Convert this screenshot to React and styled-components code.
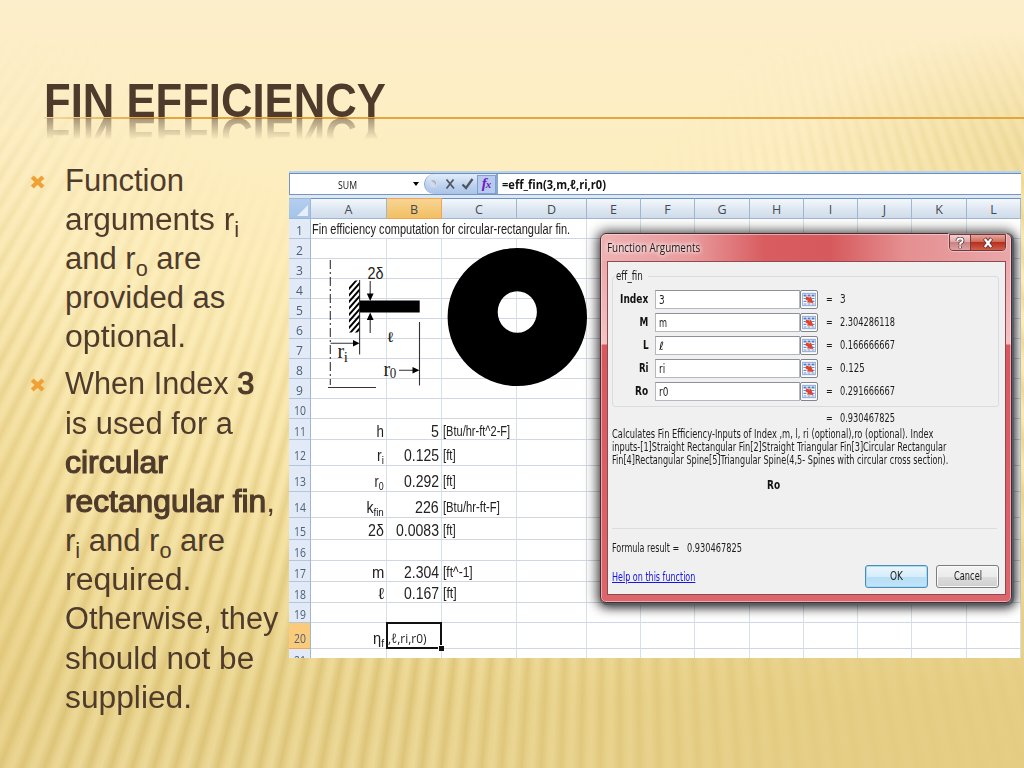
import React, { useLayoutEffect, useRef, useState } from "react";
import styled, { createGlobalStyle } from "styled-components";

const Global = createGlobalStyle`
  * { box-sizing: border-box; }
  body { margin: 0; overflow: hidden; }
  sub { font-size: 0.7em; line-height: 0; vertical-align: -0.3em; }
`;

/* Text squeezed or widened horizontally to a fixed measure */
const FitBox = styled.span`
  display: inline-flex;
  justify-content: ${(p) => (p.$right ? "flex-end" : "flex-start")};
  width: ${(p) => p.$w}px;
  white-space: pre;
`;
const FitInner = styled.span`
  flex: none;
  text-decoration: ${(p) => (p.$underline ? "underline" : "none")};
  transform-origin: ${(p) => (p.$right ? "100%" : "0")} 50%;
`;
function Fit({ w, right, underline, children }) {
  const ref = useRef(null);
  const [k, setK] = useState(1);
  useLayoutEffect(() => {
    if (ref.current && ref.current.offsetWidth) {
      setK(w / ref.current.offsetWidth);
    }
  }, [w]);
  return (
    <FitBox $w={w} $right={right}>
      <FitInner ref={ref} $right={right} $underline={underline} style={{ transform: `scaleX(${k})` }}>
        {children}
      </FitInner>
    </FitBox>
  );
}

const Slide = styled.main`
  width: 1024px;
  height: 768px;
  overflow: hidden;
  position: relative;
  isolation: isolate;
  color: #4f3b2b;
  font-family: "Liberation Sans", sans-serif;
  background: linear-gradient(180deg, #fdeecb 0, #fdeec4 110px, #fdedba 260px, #f8e5a8 440px, #eed892 590px, #e6cf86 700px, #e6cf88 768px);
  &::before {
    content: "";
    position: absolute;
    inset: 0;
    z-index: -1;
    background: repeating-conic-gradient(from 0deg at 620px -800px,
      rgba(190, 158, 70, 0.24) 0deg, rgba(255, 244, 200, 0.28) 0.32deg,
      rgba(255, 240, 190, 0.2) 0.48deg, rgba(190, 158, 70, 0.24) 0.72deg);
    mask-image:
      linear-gradient(180deg, transparent 30px, #000 150px),
      radial-gradient(ellipse 620px 420px at 430px 0, transparent 50%, rgba(0, 0, 0, 0.9) 110%),
      radial-gradient(ellipse 560px 260px at 1000px 740px, rgba(0, 0, 0, 0.25) 30%, #000 100%);
    mask-composite: intersect;
  }
  &::after {
    content: "";
    position: absolute;
    inset: 0;
    z-index: -1;
    background:
      radial-gradient(ellipse 620px 300px at 1024px 768px, rgba(229, 204, 130, 0.7), transparent),
      radial-gradient(ellipse 260px 130px at 1040px 160px, rgba(232, 208, 130, 0.55), transparent),
      radial-gradient(ellipse 90px 420px at 0 560px, rgba(226, 198, 118, 0.35), transparent);
  }
`;

const Header = styled.header`
  height: 171px;
  padding: 82px 0 0 44px;
`;
const Title = styled.h1`
  margin: 0;
  height: 35px;
  width: 345px;
  font-size: 49px;
  font-weight: 700;
  line-height: 36.6px;
  -webkit-box-reflect: below 1px linear-gradient(transparent 38%, rgba(0, 0, 0, 0.5));
`;
const Rule = styled.div`
  height: 2px;
  background: linear-gradient(90deg, rgba(226, 163, 62, 0.25), #e2a540 110px);
`;

const Columns = styled.div`
  display: flex;
  align-items: flex-start;
`;
const Bullets = styled.ul`
  list-style: none;
  margin: -10.5px 0 0;
  padding: 0 0 0 30px;
  width: 289px;
  flex: none;
  display: flex;
  flex-direction: column;
  gap: 7.9px;
`;
const Bullet = styled.li`
  display: grid;
  grid-template-columns: 35px 1fr;
  font-size: 31px;
  line-height: 39.2px;
`;
const Mark = styled.svg`
  width: 16px;
  height: 16px;
  margin-top: 13px;
`;
const Lines = styled.div`
  display: flex;
  flex-direction: column;
`;
const Line = styled.span`
  display: block;
  height: 39.2px;
  sub { vertical-align: -0.34em; }
`;
const Strong = styled.strong`
  font-weight: 400;
  -webkit-text-stroke: 1.2px currentColor;
`;

/* ---------- spreadsheet ---------- */
const Sheet = styled.section`
  position: relative;
  width: 732px;
  height: 487px;
  overflow: hidden;
  background: #fff;
  color: #222;
`;
const FormulaBar = styled.div`
  display: flex;
  height: 24px;
  border-top: 2px solid #b9d3ee;
  border-bottom: 1px solid #7795bd;
  box-shadow: inset 0 1px #6c8ebb, inset 1px 0 #7795bd;
  font-family: "Open Sans", sans-serif;
`;
const NameBox = styled.div`
  width: 134px;
  padding: 1px 4px 0 49px;
  display: flex;
  align-items: center;
  justify-content: space-between;
  font-size: 11.5px;
  color: #111;
`;
const Caret = styled.i`
  border: 3.5px solid transparent;
  border-top: 4px solid #000;
  border-bottom: 0;
`;
const FxTools = styled.div`
  display: flex;
  align-items: center;
  width: 74px;
  margin: 1px 0 0 1px;
  border-radius: 11px 0 0 11px;
  background: linear-gradient(#e3edf9, #bcd1ee 60%, #a9c4e9);
  border: 1px solid #8aa7d0;
  border-width: 0 2px 0 1px;
`;
const FxSvg = styled.svg`
  width: 52px;
  height: 20px;
  flex: none;
`;
const Fx = styled.span`
  flex: 1;
  height: 19px;
  border: 1px solid #7e9fd4;
  background: #b6cbee;
  color: #7416c4;
  font: italic 700 15px/14px "Liberation Serif", serif;
  text-align: center;
  small { font-size: 11px; margin-left: -1px; }
`;
const Formula = styled.div`
  padding: 1px 0 0 4px;
  font-size: 13px;
  font-weight: 700;
  line-height: 20px;
  color: #111;
`;
const Strip = styled.div`
  height: 3px;
  background: #dbe8f6;
`;
const Grid = styled.div`
  display: grid;
  grid-template-columns: 22px 76px 55px 75px 70px 54px 54px 55px 54px 54px 54px 55px 54px;
  grid-template-rows: 21px 20px 20px 20px 20px 20px 20px 20px 20px 20px 20px 21px 26px 26px 26px 22px 21px 21px 21px 20px 26px 20px;
`;
const HeadCell = styled.div`
  display: flex;
  justify-content: center;
  border: 1px solid #9eb6ce;
  border-width: 1px 1px 1px 0;
  border-top-color: #6f93bf;
  background: ${(p) => (p.$on ? "linear-gradient(#f8d593, #f2bf62)" : "linear-gradient(#f4f8fd, #dfe8f2 50%, #d0dcea)")};
  ${(p) => p.$on && "border-color: #f0a458;"}
  color: #434a52;
  font: 12.5px/21px "Open Sans", sans-serif;
`;
const Corner = styled.div`
  border: 1px solid #9eb6ce;
  border-width: 1px 1px 1px 0;
  background: linear-gradient(#b4cfee, #a3c3e9);
  display: flex;
  justify-content: flex-end;
  align-items: flex-end;
  padding: 2px;
  &::after {
    content: "";
    border-left: 11px solid transparent;
    border-bottom: 11px solid #e6eff9;
  }
`;
const RowHead = styled.div`
  display: flex;
  align-items: flex-end;
  justify-content: center;
  padding-bottom: ${(p) => (p.$tall ? 2 : 0.5)}px;
  border-right: 1px solid #9eb6ce;
  border-bottom: 1px solid ${(p) => (p.$on ? "#f0a458" : "#b4c6da")};
  background: ${(p) => (p.$on ? "#fbcb7c" : "#e1eaf6")};
  color: #4a6178;
  font: 13px/16px "Open Sans", sans-serif;
`;
const Cell = styled.div`
  display: flex;
  align-items: flex-end;
  justify-content: ${(p) => (p.$right ? "flex-end" : "flex-start")};
  grid-column: span ${(p) => p.$span || 1};
  padding: 0 ${(p) => (p.$right ? 2 : 0)}px ${(p) => (p.$tall ? 2 : p.$low ? 0 : 1)}px ${(p) => (p.$right ? 0 : 1)}px;
  border-right: 1px solid #d7dfe8;
  border-bottom: 1px solid #d0d7e2;
  font-size: ${(p) => (p.$small ? 14 : 16)}px;
  line-height: ${(p) => (p.$small ? 15 : 15.5)}px;
  min-width: 0;
`;
const ActiveCell = styled(Cell)`
  position: relative;
  border: 0;
  padding-bottom: 2px;
  font: 13px/18px "Open Sans", sans-serif;
  &::before {
    content: "";
    position: absolute;
    inset: -1px 0 0 -1px;
    border: 2px solid #111;
  }
  &::after {
    content: "";
    position: absolute;
    right: -2px;
    bottom: -2px;
    width: 5px;
    height: 5px;
    background: #111;
    border: 1px solid #fff;
    border-width: 1px 0 0 1px;
  }
`;
const Drawing = styled.svg`
  position: absolute;
  left: 0;
  top: 0;
  width: 732px;
  height: 487px;
`;

/* ---------- dialog window ---------- */
const Dialog = styled.div`
  position: absolute;
  left: 311px;
  top: 62px;
  width: 412px;
  height: 370px;
  display: flex;
  flex-direction: column;
  padding: 1px 5px 7px 6px;
  border: 1px solid #4b2b31;
  border-radius: 6px;
  background:
    linear-gradient(90deg, #eeb2b3 0, #e99b9d 22%, #d85c60 40%, #d65a5d 56%, #e58f91 74%, #e9a7a8 100%) 0 0 / 100% 27px no-repeat,
    linear-gradient(#eaa1a4 0, #f3c3c4 110px, #d9575d 111px, #dc666b 100%);
  box-shadow: inset 0 0 0 1px rgba(255, 225, 225, 0.55), 1px 1px 0 1px #53606b, 0 1px 12px 4px rgba(0, 0, 0, 0.55), 2px 3px 10px rgba(0, 0, 0, 0.6);
  font-family: "DejaVu Sans Condensed", "DejaVu Sans", sans-serif;
  font-size: 11.5px;
  color: #1c1c1c;
`;
const TitleBar = styled.div`
  display: flex;
  justify-content: space-between;
  height: 26px;
  line-height: 25px;
  flex: none;
  text-shadow: 0 0 5px #fff, 0 0 6px #fff;
  font-family: "Open Sans", sans-serif;
  font-size: 12px;
`;
const WinButtons = styled.div`
  display: flex;
  height: 17px;
  margin-top: -1px;
  border: 1px solid #6c3940;
  border-radius: 0 0 4px 4px;
  overflow: hidden;
  box-shadow: 0 0 0 1px rgba(255, 220, 220, 0.5);
`;
const WinButton = styled.span`
  display: flex;
  align-items: center;
  justify-content: center;
  width: ${(p) => p.$w}px;
  background: ${(p) => (p.$close ? "linear-gradient(#e7a79a, #d06a5a 45%, #b5301d 50%, #d0604a)" : "linear-gradient(#f3d0cf, #e5a9a9 45%, #c98283 50%, #dda2a2)")};
  border-left: ${(p) => (p.$close ? "1px solid #7c3b3f" : "0")};
  svg { width: 12px; height: 12px; }
`;
const Body = styled.div`
  flex: 1;
  border: 1px solid #8e4a50;
  background: #f0f0f0;
  padding: 14px 6px 0 3.5px;
  display: flex;
  flex-direction: column;
`;
const Group = styled.div`
  height: 131px;
  border: 1px solid #d9dcdf;
  border-radius: 3px;
  padding: 0 0 0 2px;
`;
const Legend = styled.div`
  width: 33px;
  height: 13px;
  margin-top: -7px;
  padding-left: 1.5px;
  line-height: 12px;
  background: #f0f0f0;
`;
const ArgRow = styled.div`
  display: flex;
  height: 19px;
  margin-top: ${(p) => (p.$first ? 7 : 4.1)}px;
  line-height: 18px;
  width: 372px;
`;
const ArgLabel = styled.b`
  width: 34px;
  margin-right: 6.5px;
  display: flex;
  justify-content: flex-end;
  color: #111;
`;
const Input = styled.div`
  width: 145px;
  padding: 0 0 0 3px;
  line-height: 18px;
  background: #fff;
  border: 1px solid #b4b7bd;
  border-top-color: #8d9097;
`;
const RefButton = styled.span`
  width: 18px;
  border: 1px solid #80848b;
  border-radius: 2px;
  background: #eceff3;
  box-shadow: inset 0 0 0 1px #fff;
  padding: 1px;
  svg { display: block; width: 14px; height: 15px; }
`;
const Equals = styled.span`
  width: 14px;
  margin-left: 8px;
`;
const ResultLine = styled.div`
  display: flex;
  height: 16px;
  margin-top: 4px;
  padding-left: 214.5px;
  line-height: 15px;
  flex: none;
`;
const ResultValue = styled.span`
  margin-left: 7px;
`;
const Description = styled.div`
  display: flex;
  flex-direction: column;
  height: 50px;
  margin-top: 0.5px;
  line-height: 13.1px;
`;
const Current = styled.b`
  display: flex;
  justify-content: center;
  height: 51px;
  padding-right: 62px;
  border-bottom: 1px solid #dcdcdc;
  margin-right: 2px;
  color: #111;
`;
const ResultText = styled.div`
  display: flex;
  gap: 8px;
  margin-top: 12px;
  height: 15px;
  line-height: 15px;
`;
const Footer = styled.div`
  display: flex;
  align-items: flex-start;
  margin-top: 9px;
  gap: 8px;
`;
const HelpLink = styled.a`
  flex: 1;
  color: #1414e6;
  line-height: 24px;
`;
const Button = styled.span`
  display: flex;
  justify-content: center;
  width: 63px;
  height: 23px;
  line-height: 20px;
  border: 1px solid ${(p) => (p.$primary ? "#4d8cb8" : "#7d7d7d")};
  border-radius: 3px;
  box-shadow: inset 0 0 0 1px ${(p) => (p.$primary ? "#a8dcf5" : "#fafafa")};
  background: ${(p) => (p.$primary ? "linear-gradient(#eaf6fd, #d6edfb 50%, #b7def6 51%, #c0e4f9)" : "linear-gradient(#f3f3f3, #ebebeb 50%, #dddddd 51%, #cfcfcf)")};
`;

const sheetRows = [
  { n: 11, low: true, a: "h", aw: 7.5, b: "5", bw: 8, c: "[Btu/hr-ft^2-F]", cw: 67 },
  { n: 12, tall: true, a: <>r<sub>i</sub></>, aw: 7, b: "0.125", bw: 35, c: "[ft]", cw: 13 },
  { n: 13, tall: true, a: <>r<sub>0</sub></>, aw: 9.5, b: "0.292", bw: 35, c: "[ft]", cw: 13 },
  { n: 14, tall: true, a: <>k<sub>fin</sub></>, aw: 17.5, b: "226", bw: 24, c: "[Btu/hr-ft-F]", cw: 57 },
  { n: 15, a: "2δ", aw: 16, b: "0.0083", bw: 43, c: "[ft]", cw: 13 },
  { n: 16 },
  { n: 17, a: "m", aw: 12, b: "2.304", bw: 35, c: "[ft^-1]", cw: 30 },
  { n: 18, a: "ℓ", aw: 5.5, b: "0.167", bw: 35, c: "[ft]", cw: 14 },
  { n: 19 },
  { n: 20, tall: true, a: <>η<sub>f</sub></>, aw: 11, active: true },
  { n: 21 },
];

const args = [
  { label: "Index", lw: 28, value: "3", vw: 6, out: "3", ow: 6 },
  { label: "M", lw: 8.5, value: "m", vw: 8, out: "2.304286118", ow: 55 },
  { label: "L", lw: 6, value: "ℓ", vw: 4.5, out: "0.166666667", ow: 55 },
  { label: "Ri", lw: 10, value: "ri", vw: 6, out: "0.125", ow: 25 },
  { label: "Ro", lw: 13, value: "r0", vw: 9.5, out: "0.291666667", ow: 55 },
];

const Blank = ({ count }) => Array.from({ length: count }, (_, i) => <Cell key={i} />);

const BulletMark = () => (
  <Mark viewBox="0 0 16 16">
    <path d="M2.2 3 L13 13 M13 3 L2.2 13" stroke="#f0a136" strokeWidth="4.3" fill="none" />
  </Mark>
);

function RefIcon() {
  return (
    <svg viewBox="0 0 14 15">
      <rect x="0.5" y="1.5" width="13" height="12" fill="#fff" stroke="#9db4da" />
      <path d="M1.500 3.500H12.500" stroke="#4f7ec8" strokeWidth="2" strokeDasharray="3 1" />
      <path d="M1.500 6.500H13M1.500 9.300H13M1.500 12H13" stroke="#5f8bd0" strokeWidth="1.200" strokeDasharray="3 1" />
      <path d="M4 4.600 L7.600 5.600 L9 4.400 L11.400 11 L4.800 10.600 L6.300 9 L3.600 7.400 Z" fill="#e0452c" />
    </svg>
  );
}

function FinDrawing() {
  const hatch = [];
  for (let y = 284; y <= 338; y += 6.5) hatch.push(`M347 ${y + 7} L362 ${y - 10}`);
  return (
    <Drawing viewBox="289 171 732 487">
      <defs>
        <clipPath id="wall"><rect x="349" y="280.500" width="10.500" height="52" /></clipPath>
      </defs>
      <g stroke="#333" strokeWidth="1.1" fill="none">
        <path d="M330.3 260V385" strokeDasharray="9 3 2 3" />
        <path d="M359.6 280V354.500M419.500 322V385.500M328 387.500H376" />
        <path d="M370.200 281V295M370.200 333V319M330.500 343.300H354M399 370.300H414" />
        <path d={hatch.join(" ")} stroke="#000" strokeWidth="1.9" clipPath="url(#wall)" />
      </g>
      <path d="M366.800 293.500h6.800L370.200 301zM366.800 320h6.800L370.200 312.500zM353 340v6.600L359.500 343.300zM412.500 367v6.600L419.500 370.300z" fill="#000" />
      <rect x="360" y="300.500" width="59.700" height="12" fill="#000" />
      <path fillRule="evenodd" d="M447.600 317a69.700 69 0 1 0 139.400 0a69.700 69 0 1 0 -139.400 0zM497.700 312a19.600 20.800 0 1 0 39.200 0a19.600 20.800 0 1 0 -39.200 0z" fill="#000" />
      <g fill="#222" fontFamily="Liberation Sans, sans-serif">
        <text x="367.500" y="279" fontSize="16" textLength="16" lengthAdjust="spacingAndGlyphs">2δ</text>
        <text x="387.500" y="341.500" fontSize="14" textLength="6" lengthAdjust="spacingAndGlyphs">ℓ</text>
      </g>
      <g fill="#222" fontFamily="Liberation Serif, serif">
        <text x="337.500" y="358" fontSize="20">r</text>
        <text x="343.800" y="362" fontSize="15">i</text>
        <text x="383.500" y="375.500" fontSize="20">r</text>
        <text x="389.800" y="377.500" fontSize="15" textLength="6.500" lengthAdjust="spacingAndGlyphs">0</text>
      </g>
    </Drawing>
  );
}

function FunctionDialog() {
  return (
    <Dialog>
      <TitleBar>
        <Fit w={93}>Function Arguments</Fit>
        <WinButtons>
          <WinButton $w={20}>
            <svg viewBox="0 0 12 12">
              <path d="M3.300 4Q3.300 1.500 6 1.500Q8.700 1.500 8.700 3.800Q8.700 5.300 6.200 6.300V7.800M6.200 9.300V11.300" fill="none" stroke="#5a3a3e" strokeWidth="3.400" />
              <path d="M3.300 4Q3.300 1.500 6 1.500Q8.700 1.500 8.700 3.800Q8.700 5.300 6.200 6.300V7.800M6.200 9.300V11" fill="none" stroke="#fff" strokeWidth="1.800" />
            </svg>
          </WinButton>
          <WinButton $w={35} $close>
            <svg viewBox="0 0 12 12">
              <path d="M2.500 1.500L9.500 10.500M9.500 1.500L2.500 10.500" stroke="#6b3138" strokeWidth="4" />
              <path d="M2.800 2L9.200 10M9.200 2L2.800 10" stroke="#fff" strokeWidth="2.200" />
            </svg>
          </WinButton>
        </WinButtons>
      </TitleBar>
      <Body>
        <Group>
          <Legend><Fit w={27}>eff_fin</Fit></Legend>
          {args.map((r, i) => (
            <ArgRow key={r.label} $first={i === 0}>
              <ArgLabel><Fit w={r.lw} right>{r.label}</Fit></ArgLabel>
              <Input><Fit w={r.vw}>{r.value}</Fit></Input>
              <RefButton><RefIcon /></RefButton>
              <Equals><Fit w={7}>=</Fit></Equals>
              <Fit w={r.ow}>{r.out}</Fit>
            </ArgRow>
          ))}
        </Group>
        <ResultLine>
          <Fit w={7}>=</Fit>
          <ResultValue><Fit w={55}>0.930467825</Fit></ResultValue>
        </ResultLine>
        <Description>
          <Fit w={321}>Calculates Fin Efficiency-Inputs of Index ,m, l, ri (optional),ro (optional). Index</Fit>
          <Fit w={334}>inputs-[1]Straight Rectangular Fin[2]Straight Triangular Fin[3]Circular Rectangular</Fit>
          <Fit w={336}>Fin[4]Rectangular Spine[5]Triangular Spine(4,5- Spines with circular cross section).</Fit>
        </Description>
        <Current><Fit w={13}>Ro</Fit></Current>
        <ResultText>
          <Fit w={67}>Formula result =</Fit>
          <Fit w={55}>0.930467825</Fit>
        </ResultText>
        <Footer>
          <HelpLink><Fit w={83} underline>Help on this function</Fit></HelpLink>
          <Button $primary><Fit w={13}>OK</Fit></Button>
          <Button><Fit w={28}>Cancel</Fit></Button>
        </Footer>
      </Body>
    </Dialog>
  );
}

function Spreadsheet() {
  return (
    <Sheet>
      <FormulaBar>
        <NameBox><Fit w={19}>SUM</Fit><Caret /></NameBox>
        <FxTools>
          <FxSvg viewBox="0 0 52 20">
            <circle cx="8.500" cy="9.500" r="4" fill="#cfdaeb" />
            <path d="M6 7q4 -2 5 2v3q-1 -4 -5 -5z" fill="#9fafc6" />
            <path d="M21.500 5.500L29 14.500M28.500 5.500L21.500 14.500" stroke="#4c5560" strokeWidth="1.700" />
            <path d="M37.500 10.500L41 14L47.500 5" stroke="#4c5560" strokeWidth="2.300" fill="none" />
          </FxSvg>
          <Fx>f<small>x</small></Fx>
        </FxTools>
        <Formula><Fit w={104}>=eff_fin(3,m,ℓ,ri,r0)</Fit></Formula>
      </FormulaBar>
      <Strip />
      <Grid>
        <Corner />
        {"ABCDEFGHIJKL".split("").map((c) => (
          <HeadCell key={c} $on={c === "B"}>{c}</HeadCell>
        ))}
        <RowHead><Fit w={6.5}>1</Fit></RowHead>
        <Cell $small $span={4}><Fit w={258}>Fin efficiency computation for circular-rectangular fin.</Fit></Cell>
        <Blank count={8} />
        {[2, 3, 4, 5, 6, 7, 8, 9, 10].map((n) => (
          <React.Fragment key={n}>
            <RowHead><Fit w={n > 9 ? 12 : 6.5}>{n}</Fit></RowHead>
            <Blank count={12} />
          </React.Fragment>
        ))}
        {sheetRows.map((r) => (
          <React.Fragment key={r.n}>
            <RowHead $on={r.active} $tall={r.tall}><Fit w={12}>{r.n}</Fit></RowHead>
            <Cell $right $tall={r.tall} $low={r.low}>{r.a && <Fit w={r.aw} right>{r.a}</Fit>}</Cell>
            {r.active
              ? <ActiveCell><Fit w={38.5}>,ℓ,ri,r0)</Fit></ActiveCell>
              : <Cell $right $tall={r.tall} $low={r.low}>{r.b && <Fit w={r.bw} right>{r.b}</Fit>}</Cell>}
            <Cell $small $tall={r.tall} $low={r.low}>{r.c && <Fit w={r.cw}>{r.c}</Fit>}</Cell>
            <Blank count={9} />
          </React.Fragment>
        ))}
      </Grid>
      <FinDrawing />
      <FunctionDialog />
    </Sheet>
  );
}

export default function App() {
  return (
    <>
      <Global />
      <Slide>
        <Header>
          <Title><Fit w={342}>FIN EFFICIENCY</Fit></Title>
          <Rule />
        </Header>
        <Columns>
          <Bullets>
            <Bullet>
              <BulletMark />
              <Lines>
                <Line><Fit w={119}>Function</Fit></Line>
                <Line><Fit w={174}>arguments r<sub>i</sub></Fit></Line>
                <Line><Fit w={136}>and r<sub>o</sub> are</Fit></Line>
                <Line><Fit w={160}>provided as</Fit></Line>
                <Line><Fit w={121}>optional.</Fit></Line>
              </Lines>
            </Bullet>
            <Bullet>
              <BulletMark />
              <Lines>
                <Line><Fit w={189}>When Index <Strong>3</Strong></Fit></Line>
                <Line><Fit w={168}>is used for a</Fit></Line>
                <Line><Fit w={103}><Strong>circular</Strong></Fit></Line>
                <Line><Fit w={210}><Strong>rectangular fin</Strong>,</Fit></Line>
                <Line><Fit w={160}>r<sub>i</sub> and r<sub>o</sub> are</Fit></Line>
                <Line><Fit w={126}>required.</Fit></Line>
                <Line><Fit w={213}>Otherwise, they</Fit></Line>
                <Line><Fit w={189}>should not be</Fit></Line>
                <Line><Fit w={127}>supplied.</Fit></Line>
              </Lines>
            </Bullet>
          </Bullets>
          <Spreadsheet />
        </Columns>
      </Slide>
    </>
  );
}
